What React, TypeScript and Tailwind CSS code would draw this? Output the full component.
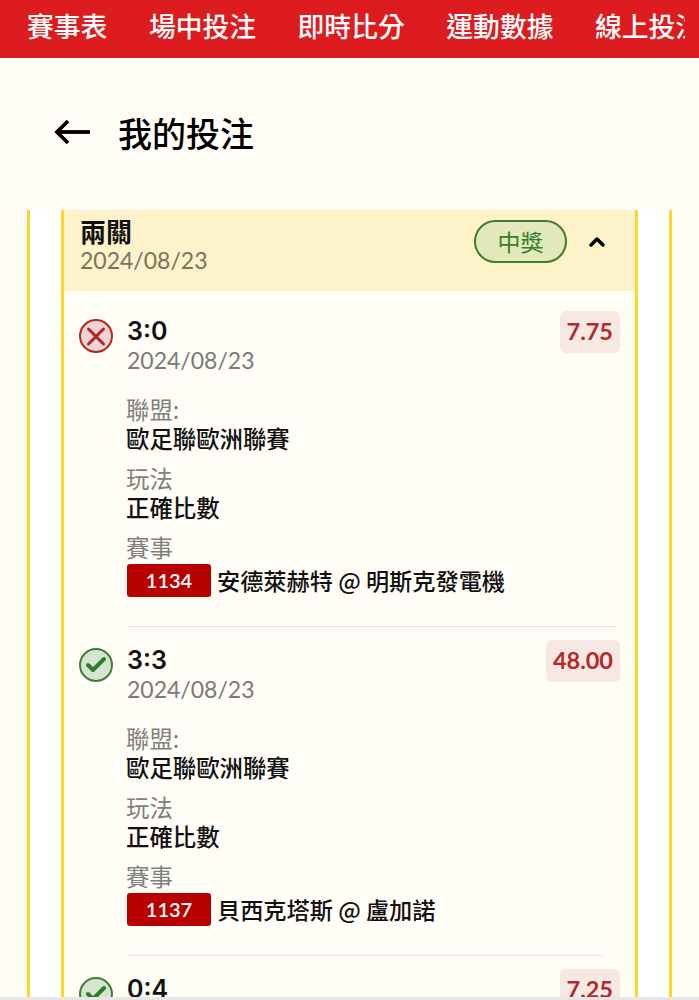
import React from 'react';
import { ChevronUp, Check, X } from 'lucide-react';

const cjk = "font-['Noto_Sans_CJK_TC','Noto_Sans',sans-serif]";

const navItems = ['賽事表', '場中投注', '即時比分', '運動數據', '線上投注'];

interface Leg {
  score: string;
  odds: string;
  won: boolean;
  code: string;
  match: string;
  dividerClass: string;
}

const legs: Leg[] = [
  { score: '3:0', odds: '7.75', won: false, code: '1134', match: '安德萊赫特 @ 明斯克發電機', dividerClass: 'mr-[4px]' },
  { score: '3:3', odds: '48.00', won: true, code: '1137', match: '貝西克塔斯 @ 盧加諾', dividerClass: 'mr-[17px]' },
];

function StatusIcon({ won }: { won: boolean }) {
  if (won) {
    return (
      <div className="w-[34px] h-[34px] rounded-full border-2 border-[#3f7d3a] bg-[#d7e5d0] flex items-center justify-center shrink-0">
        <Check className="w-[24px] h-[24px] text-[#2f7d2a]" strokeWidth={4} />
      </div>
    );
  }
  return (
    <div className="w-[34px] h-[34px] rounded-full border-2 border-[#b3242c] bg-[#f2d3d3] flex items-center justify-center shrink-0">
      <X className="w-[33px] h-[33px] text-[#b3242c]" strokeWidth={2.4} />
    </div>
  );
}

function Score({ value }: { value: string }) {
  return <div className="font-['Inter',sans-serif] font-semibold text-[25px] leading-[30px] mt-[5px] text-[#111]">{value}</div>;
}

function Odds({ value }: { value: string }) {
  return (
    <div className="font-['Lato',sans-serif] font-bold text-[23.5px] h-[42px] px-[7px] rounded-[6px] bg-[#f6e8e3] text-[#b5282a] flex items-center">
      {value}
    </div>
  );
}

function Field({ label, value }: { label: string; value: string }) {
  return (
    <div className="mt-[11px] -ml-px">
      <div className="text-[23.4px] leading-[29px] text-[#808080]">{label}</div>
      <div className="text-[23.4px] leading-[29px] font-medium text-[#111]">{value}</div>
    </div>
  );
}

function LegRow({ leg }: { leg: Leg }) {
  return (
    <div className="flex pl-[15px] pr-[15px] h-[316px] mb-[13px]">
      <div className="w-[48px] pt-[8px] shrink-0">
        <StatusIcon won={leg.won} />
      </div>
      <div className="flex-1 min-w-0 flex flex-col">
        <div className="flex justify-between items-start">
          <div>
            <Score value={leg.score} />
            <div className="font-['Lato',sans-serif] text-[23px] leading-[28px] text-[#7a7a7a]">2024/08/23</div>
          </div>
          <Odds value={leg.odds} />
        </div>
        <div className="mt-[10px]">
          <Field label="聯盟:" value="歐足聯歐洲聯賽" />
          <Field label="玩法" value="正確比數" />
          <div className="mt-[11px]">
            <div className="-ml-px text-[23.4px] leading-[29px] text-[#808080]">賽事</div>
            <div className="flex items-center gap-[6px] mt-[1px]">
              <div className="w-[84px] h-[33px] rounded-[3px] bg-[#b80000] text-white font-['Lato',sans-serif] font-semibold text-[20px] flex items-center justify-center">
                {leg.code}
              </div>
              <div className="text-[23.2px] font-medium text-[#111]">{leg.match}</div>
            </div>
          </div>
        </div>
        <div className={`mt-auto h-px bg-[#e3e3df] ${leg.dividerClass}`} />
      </div>
    </div>
  );
}

export default function App() {
  return (
    <div className={`h-[1000px] overflow-hidden bg-[#fffdf5] flex flex-col relative ${cjk}`}>
      <div className="h-[58px] bg-[#dc1c1f] shrink-0">
        <div className="w-[685px] h-full overflow-hidden flex items-center gap-[41.5px] pl-[27px] pb-[6px] text-white text-[26.8px] font-medium whitespace-nowrap">
          {navItems.map((item) => (
            <span key={item} className="shrink-0">{item}</span>
          ))}
        </div>
      </div>

      <div className="h-[152px] shrink-0 flex items-center gap-[27px] pl-[54px] pb-[4px] text-black">
        <svg width="37" height="26" viewBox="0 0 37 26" fill="none" stroke="currentColor" strokeWidth="3.8">
          <path d="M36 13H4" />
          <path d="M14 2L3 13l11 11" />
        </svg>
        <h1 className="text-[34px] font-medium">我的投注</h1>
      </div>

      <div className="flex-1 min-h-0 mx-[27px] border-x-[3px] border-[#fdd628] bg-white px-[31px]">
        <div className="h-full border-x-[3px] border-[#fdd628] bg-[#fffdf5]">
          <div className="h-[81px] bg-[#fdf2c9] flex items-start justify-between pl-[16px] pr-[26px]">
            <div className="pt-[6px]">
              <div className="text-[26px] leading-[30px] font-bold text-[#111]">兩關</div>
              <div className="font-['Lato',sans-serif] text-[23px] leading-[28px] text-[#79745f]">2024/08/23</div>
            </div>
            <div className="flex items-center gap-[18px] pt-[10px]">
              <div className="w-[93px] h-[43px] rounded-full border-2 border-[#3f7d2e] bg-[#e3e8bd] text-[#35802a] text-[23px] font-normal flex items-center justify-center">
                中獎
              </div>
              <ChevronUp className="w-[24px] h-[24px] text-black" strokeWidth={3.5} />
            </div>
          </div>

          <div className="pt-[20px]">
            {legs.map((leg) => (
              <LegRow key={leg.code} leg={leg} />
            ))}

            <div className="flex pl-[15px] pr-[15px]">
              <div className="w-[48px] pt-[8px] shrink-0">
                <StatusIcon won />
              </div>
              <div className="flex-1 flex justify-between items-start">
                <Score value="0:4" />
                <Odds value="7.25" />
              </div>
            </div>
          </div>
        </div>
      </div>

      <div className="absolute bottom-0 left-0 right-0 h-[3px] bg-[#e6e6e6]" />
    </div>
  );
}
